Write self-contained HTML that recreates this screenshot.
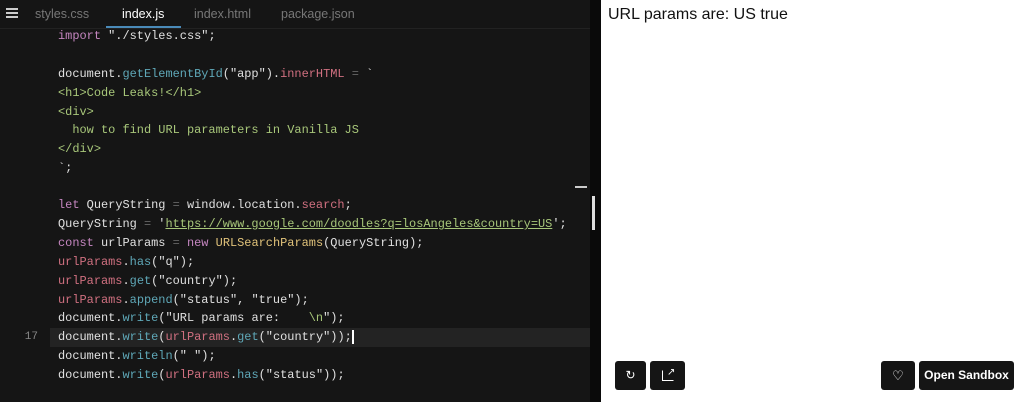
<html><head><style>
body{margin:0;width:1023px;height:402px;background:#151515;overflow:hidden;position:relative;font-family:"Liberation Sans",sans-serif}
.tabs{position:absolute;left:0;top:0;width:590px;height:28px;background:#151515;border-bottom:1px solid #222}
.tab{position:absolute;top:7px;font-size:12.5px;color:#777}
.code{position:absolute;left:0;top:27px;width:590px;font-family:"Liberation Mono",monospace;font-size:11.95px;color:#e0e0e0}
.l{position:absolute;left:58px;white-space:pre;height:19px;line-height:19px}
.n{position:absolute;left:14px;width:24px;text-align:right;color:#2a2a2a;font-size:10px;line-height:19px}
.k{color:#c586c0}.f{color:#5fa8b8}.s{color:#e0e0e0}.g{color:#a8c77a}.p{color:#d07080}.y{color:#e0c27a}.o{color:#666}
</style></head><body>
<div class="tabs">
<div style="position:absolute;left:6px;top:8px;width:12px;height:2px;background:#ccc;box-shadow:0 4px 0 #ccc,0 8px 0 #ccc"></div>
<div class="tab" style="left:35px">styles.css</div>
<div class="tab" style="left:122px;color:#fff">index.js</div>
<div style="position:absolute;left:106px;top:26px;width:75px;height:2px;background:#4a8ab8"></div>
<div class="tab" style="left:194px">index.html</div>
<div class="tab" style="left:281px">package.json</div>
</div>
<div style="position:absolute;left:50px;top:328px;width:540px;height:19px;background:#232323"></div>
<div style="position:absolute;left:590px;top:0;width:11px;height:402px;background:#0a0a0a"></div>
<div style="position:absolute;left:575px;top:186px;width:12px;height:2px;background:#ccc"></div>
<div style="position:absolute;left:592px;top:196px;width:3px;height:34px;background:#ddd"></div>
<div class="code">
<div class="l" style="top:0"><span class="k">import</span> "./styles.css";</div>
<div class="l" style="top:38px">document.<span class="f">getElementById</span>("app").<span class="p">innerHTML</span> <span class="o">=</span> `</div>
<div class="l g" style="top:57px">&lt;h1&gt;Code Leaks!&lt;/h1&gt;</div>
<div class="l g" style="top:76px">&lt;div&gt;</div>
<div class="l g" style="top:94px">  how to find URL parameters in Vanilla JS</div>
<div class="l g" style="top:113px">&lt;/div&gt;</div>
<div class="l" style="top:132px">`;</div>
<div class="l" style="top:169px"><span class="k">let</span> QueryString <span class="o">=</span> window.location.<span class="p">search</span>;</div>
<div class="l" style="top:188px">QueryString <span class="o">=</span> '<span class="g" style="text-decoration:underline">https://www.google.com/doodles?q=losAngeles&amp;country=US</span>';</div>
<div class="l" style="top:207px"><span class="k">const</span> urlParams <span class="o">=</span> <span class="k">new</span> <span class="y">URLSearchParams</span>(QueryString);</div>
<div class="l" style="top:226px"><span class="p">urlParams</span>.<span class="f">has</span>("q");</div>
<div class="l" style="top:245px"><span class="p">urlParams</span>.<span class="f">get</span>("country");</div>
<div class="l" style="top:264px"><span class="p">urlParams</span>.<span class="f">append</span>("status", "true");</div>
<div class="l" style="top:282px">document.<span class="f">write</span>("URL params are:    <span class="g">\n</span>");</div>
<div class="l" style="top:301px">document.<span class="f">write</span>(<span class="p">urlParams</span>.<span class="f">get</span>("country"));<span style="border-left:2px solid #fff"></span></div>
<div class="n" style="top:301px;color:#888;font-size:11px">17</div>
<div class="l" style="top:320px">document.<span class="f">writeln</span>(" ");</div>
<div class="l" style="top:339px">document.<span class="f">write</span>(<span class="p">urlParams</span>.<span class="f">has</span>("status"));</div>
</div>
<div style="position:absolute;left:601px;top:0;width:422px;height:402px;background:#fff">
<div style="position:absolute;left:7px;top:6px;font-size:16px;color:#111">URL params are: US true</div>
<div style="position:absolute;left:14px;top:361px;width:31px;height:29px;background:#151515;border-radius:3px;color:#fff;font-size:12px;text-align:center;line-height:29px">↻</div>
<div style="position:absolute;left:49px;top:361px;width:35px;height:29px;background:#151515;border-radius:3px"><div style="position:absolute;left:12px;top:9px;width:10px;height:9px;border:1px solid #fff;border-top-color:transparent;border-right-color:transparent"></div><div style="position:absolute;left:17px;top:6px;color:#fff;font-size:10px">↗</div></div>
<div style="position:absolute;left:280px;top:361px;width:34px;height:29px;background:#151515;border-radius:3px;color:#fff;font-size:13px;text-align:center;line-height:29px">♡</div>
<div style="position:absolute;left:318px;top:361px;width:95px;height:29px;background:#151515;border-radius:3px;color:#fff;font-size:12px;font-weight:bold;text-align:center;line-height:29px">Open Sandbox</div>
</div>
</body></html>
